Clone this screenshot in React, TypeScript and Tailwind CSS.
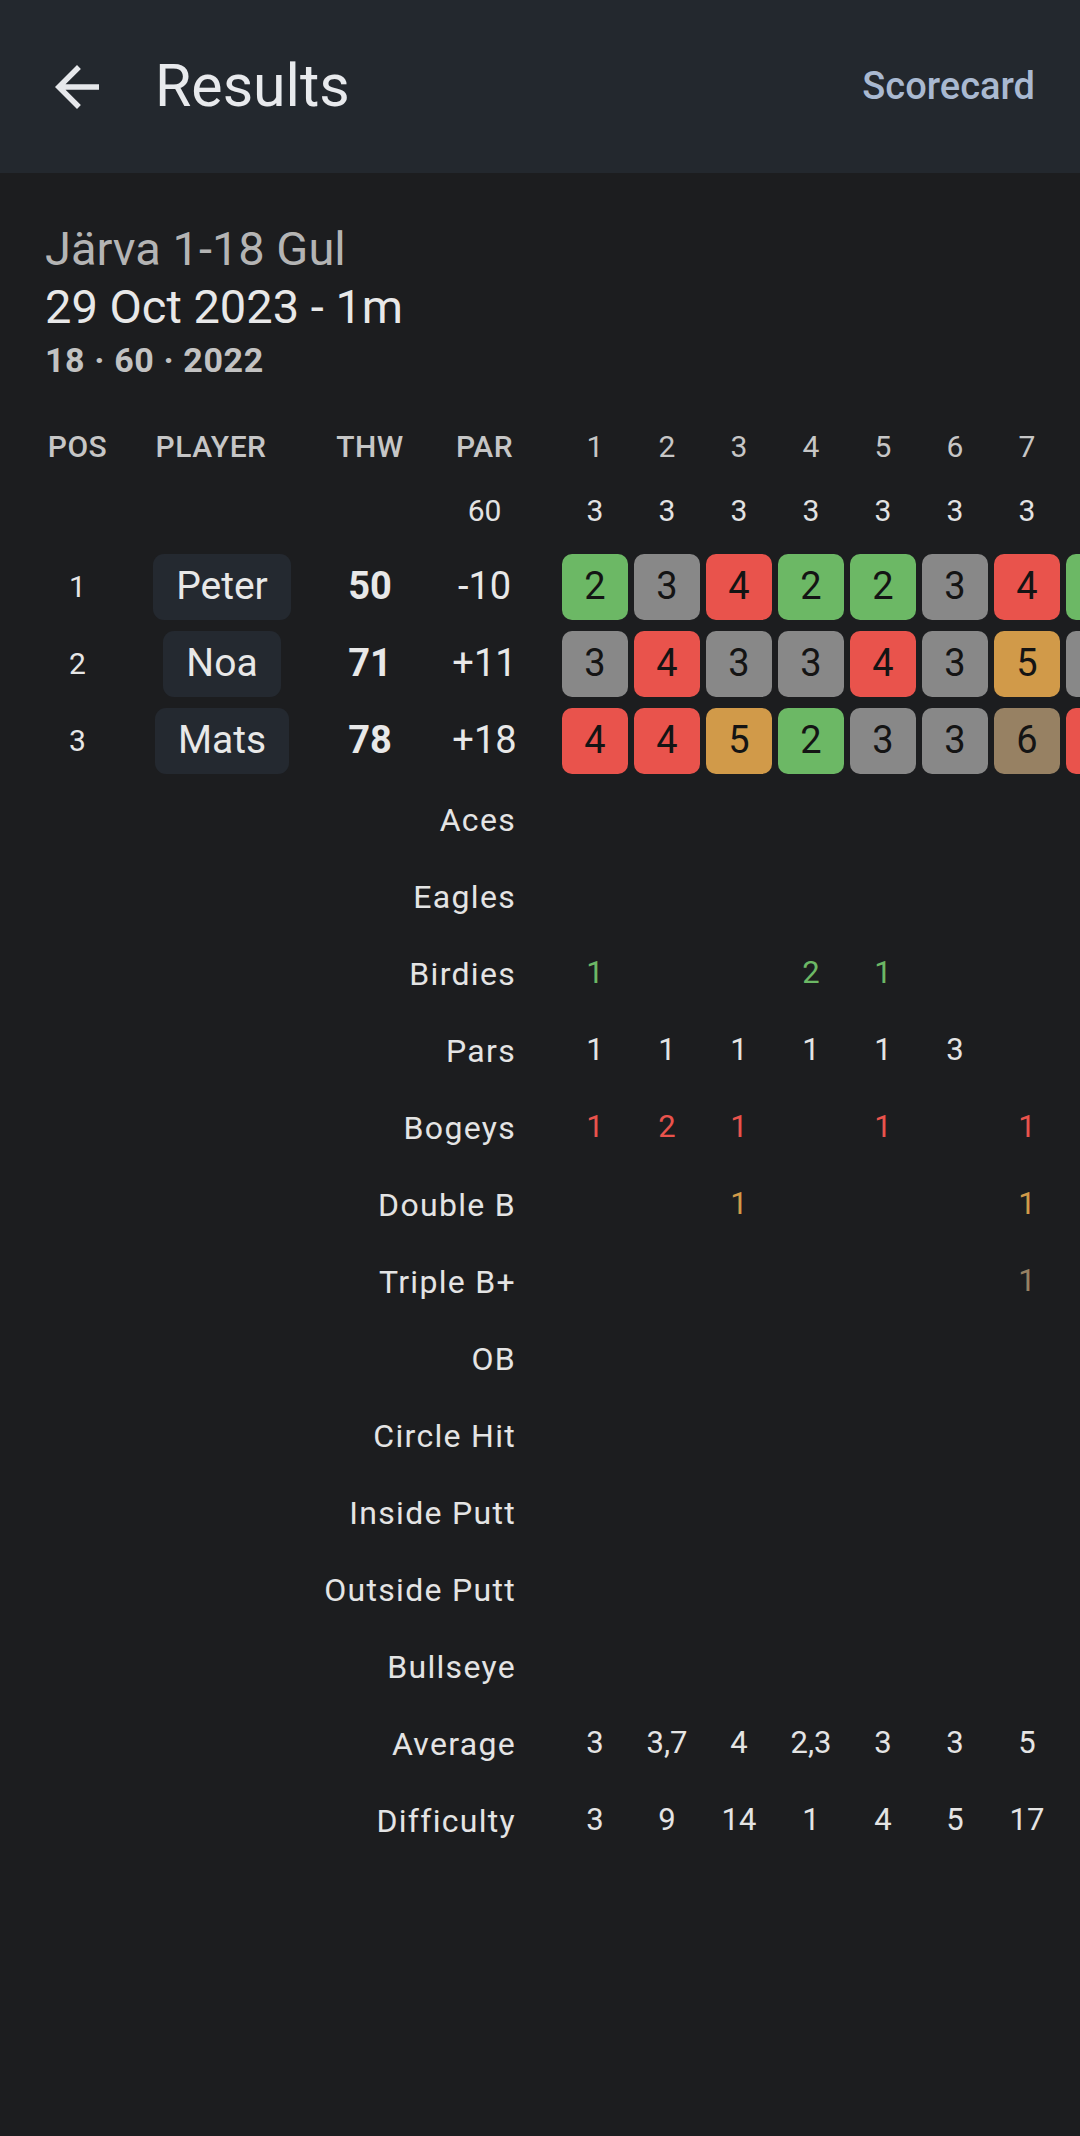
import React from 'react'

const holes = [
  { n: 1, par: 3, diff: 3 },
  { n: 2, par: 3, diff: 9 },
  { n: 3, par: 3, diff: 14 },
  { n: 4, par: 3, diff: 1 },
  { n: 5, par: 3, diff: 4 },
  { n: 6, par: 3, diff: 5 },
  { n: 7, par: 3, diff: 17 },
]

// first box of hole 8 peeks in at the right edge
const nextHole = { par: 3 }

const players = [
  { pos: 1, name: 'Peter', total: 50, toPar: '-10', scores: [2, 3, 4, 2, 2, 3, 4], next: 2 },
  { pos: 2, name: 'Noa', total: 71, toPar: '+11', scores: [3, 4, 3, 3, 4, 3, 5], next: 3 },
  { pos: 3, name: 'Mats', total: 78, toPar: '+18', scores: [4, 4, 5, 2, 3, 3, 6], next: 4 },
]

function boxColor(d: number) {
  if (d <= -1) return 'bg-[#6cb865]'
  if (d === 0) return 'bg-[#888888]'
  if (d === 1) return 'bg-[#e9534c]'
  if (d === 2) return 'bg-[#d19a49]'
  return 'bg-[#978163]'
}

type Stat = { label: string; color: string; values: (string | number | null)[] }

function countBy(test: (d: number) => boolean) {
  return holes.map((h, i) => {
    const c = players.filter((p) => test(p.scores[i] - h.par)).length
    return c > 0 ? c : null
  })
}

function avg(i: number) {
  const s = players.reduce((a, p) => a + p.scores[i], 0) / players.length
  return Number.isInteger(s) ? String(s) : s.toFixed(1).replace('.', ',')
}

const stats: Stat[] = [
  { label: 'Aces', color: 'text-[#e4e4e4]', values: holes.map((_, i) => players.filter((p) => p.scores[i] === 1).length || null) },
  { label: 'Eagles', color: 'text-[#6cb865]', values: countBy((d) => d <= -2) },
  { label: 'Birdies', color: 'text-[#6cb865]', values: countBy((d) => d === -1) },
  { label: 'Pars', color: 'text-[#e4e4e4]', values: countBy((d) => d === 0) },
  { label: 'Bogeys', color: 'text-[#e9534c]', values: countBy((d) => d === 1) },
  { label: 'Double B', color: 'text-[#d19a49]', values: countBy((d) => d === 2) },
  { label: 'Triple B+', color: 'text-[#978163]', values: countBy((d) => d >= 3) },
  { label: 'OB', color: 'text-[#e4e4e4]', values: [] },
  { label: 'Circle Hit', color: 'text-[#e4e4e4]', values: [] },
  { label: 'Inside Putt', color: 'text-[#e4e4e4]', values: [] },
  { label: 'Outside Putt', color: 'text-[#e4e4e4]', values: [] },
  { label: 'Bullseye', color: 'text-[#e4e4e4]', values: [] },
  { label: 'Average', color: 'text-[#e4e4e4]', values: holes.map((_, i) => avg(i)) },
  { label: 'Difficulty', color: 'text-[#e4e4e4]', values: holes.map((h) => h.diff) },
]

export default function App() {
  return (
    <div className="min-h-[2136px] w-[1080px] overflow-hidden bg-[#1c1d1f] font-['Roboto',sans-serif]">
      {/* top bar */}
      <header className="flex h-[173px] items-center bg-[#23282e] pl-[44px] pr-[45px]">
        <svg width="66" height="66" viewBox="0 0 24 24" fill="#e6e8eb">
          <path d="M20 11H7.83l5.59-5.59L12 4l-8 8 8 8 1.41-1.41L7.83 13H20v-2z" />
        </svg>
        <h1 className="ml-[45px] text-[59px] text-[#e8eaed]">Results</h1>
        <span className="ml-auto text-[38px] font-medium text-[#a9b9d1]">Scorecard</span>
      </header>

      <div className="pl-[45px] pt-[47px]">
        <div className="flex h-[58px] items-center text-[47px] text-[#b4b4b4]">Järva 1-18 Gul</div>
        <div className="flex h-[58px] items-center text-[47px] text-[#e8e8e8]">29 Oct 2023 - 1m</div>
        <div className="flex h-[48px] items-center text-[34px] font-bold tracking-[0.6px] text-[#c2c2c2]">18 · 60 · 2022</div>

        {/* column headers */}
        <div className="mt-[30px] flex h-[64px] items-center text-[30px] text-[#c6c6c6]">
          <div className="w-[65px] shrink-0 text-center font-medium tracking-[0.5px]">POS</div>
          <div className="w-[214px] shrink-0 pr-[12px] text-center font-medium tracking-[0.5px]">PLAYER</div>
          <div className="w-[92px] shrink-0 text-center font-medium tracking-[0.5px]">THW</div>
          <div className="w-[143px] shrink-0 pr-[6px] text-center font-medium tracking-[0.5px]">PAR</div>
          {holes.map((h) => (
            <div key={h.n} className="w-[72px] shrink-0 text-center">{h.n}</div>
          ))}
        </div>

        {/* par row */}
        <div className="flex h-[64px] items-center text-[30px] text-[#e2e2e2]">
          <div className="w-[65px] shrink-0" />
          <div className="w-[214px] shrink-0" />
          <div className="w-[92px] shrink-0" />
          <div className="w-[143px] shrink-0 pr-[6px] text-center">60</div>
          {holes.map((h) => (
            <div key={h.n} className="w-[72px] shrink-0 text-center">{h.par}</div>
          ))}
        </div>

        {/* players */}
        <div className="mt-[6px]">
          {players.map((p) => (
            <div key={p.pos} className="flex h-[77px] items-center">
              <div className="w-[65px] shrink-0 text-center text-[30px] text-[#e6e6e6]">{p.pos}</div>
              <div className="flex w-[214px] shrink-0 justify-center pl-[10px]">
                <span className="flex h-[66px] items-center rounded-[11px] bg-[#242930] px-[23px] text-[39px] text-[#e8e8e8]">
                  {p.name}
                </span>
              </div>
              <div className="w-[92px] shrink-0 text-center text-[38px] font-bold text-[#e8e8e8]">{p.total}</div>
              <div className="w-[143px] shrink-0 pr-[6px] text-center text-[38px] text-[#e8e8e8]">{p.toPar}</div>
              {holes.map((h, i) => (
                <div key={h.n} className="flex w-[72px] shrink-0 justify-center">
                  <div
                    className={`flex h-[66px] w-[66px] items-center justify-center rounded-[10px] text-[38px] text-[#141414] ${boxColor(p.scores[i] - h.par)}`}
                  >
                    {p.scores[i]}
                  </div>
                </div>
              ))}
              <div className="flex w-[72px] shrink-0 justify-center">
                <div className={`h-[66px] w-[66px] rounded-[10px] ${boxColor(p.next - nextHole.par)}`} />
              </div>
            </div>
          ))}
        </div>

        {/* stats */}
        <div>
          {stats.map((s) => (
            <div key={s.label} className="flex h-[77px] items-center pt-[4px] text-[31px]">
              <div className="w-[514px] shrink-0 pr-[43px] text-right text-[32px] tracking-[1.3px] text-[#e4e4e4]">{s.label}</div>
              {holes.map((h, i) => (
                <div key={h.n} className={`w-[72px] shrink-0 text-center ${s.color}`}>
                  {s.values[i] ?? ''}
                </div>
              ))}
            </div>
          ))}
        </div>
      </div>
    </div>
  )
}
